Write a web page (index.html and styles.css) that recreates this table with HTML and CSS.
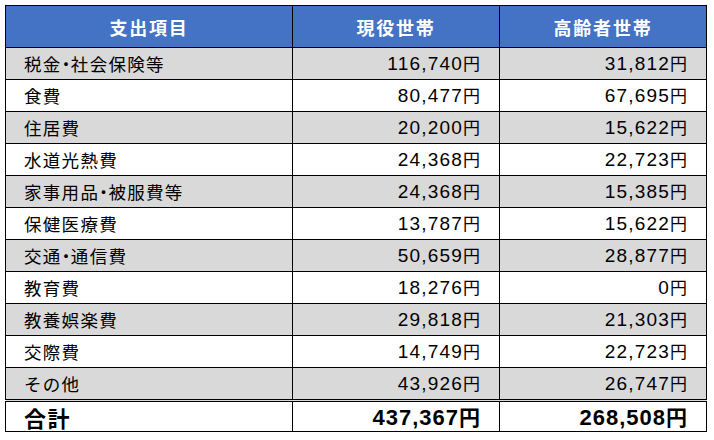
FILE: index.html
```html
<!DOCTYPE html>
<html lang="ja">
<head>
<meta charset="utf-8">
<title>支出項目</title>
<link rel="stylesheet" href="styles.css">
</head>
<body>
<table class="budget">
  <colgroup>
    <col class="c-item">
    <col class="c-val">
    <col class="c-val">
  </colgroup>
  <thead>
    <tr><th>支出項目</th><th>現役世帯</th><th>高齢者世帯</th></tr>
  </thead>
  <tbody>
    <tr class="alt"><td class="item">税金<span class="dot">・</span>社会保険等</td><td class="num">116,740<span class="yen">円</span></td><td class="num">31,812<span class="yen">円</span></td></tr>
    <tr><td class="item">食費</td><td class="num">80,477<span class="yen">円</span></td><td class="num">67,695<span class="yen">円</span></td></tr>
    <tr class="alt"><td class="item">住居費</td><td class="num">20,200<span class="yen">円</span></td><td class="num">15,622<span class="yen">円</span></td></tr>
    <tr><td class="item">水道光熱費</td><td class="num">24,368<span class="yen">円</span></td><td class="num">22,723<span class="yen">円</span></td></tr>
    <tr class="alt"><td class="item">家事用品<span class="dot">・</span>被服費等</td><td class="num">24,368<span class="yen">円</span></td><td class="num">15,385<span class="yen">円</span></td></tr>
    <tr><td class="item">保健医療費</td><td class="num">13,787<span class="yen">円</span></td><td class="num">15,622<span class="yen">円</span></td></tr>
    <tr class="alt"><td class="item">交通<span class="dot">・</span>通信費</td><td class="num">50,659<span class="yen">円</span></td><td class="num">28,877<span class="yen">円</span></td></tr>
    <tr><td class="item">教育費</td><td class="num">18,276<span class="yen">円</span></td><td class="num">0<span class="yen">円</span></td></tr>
    <tr class="alt"><td class="item">教養娯楽費</td><td class="num">29,818<span class="yen">円</span></td><td class="num">21,303<span class="yen">円</span></td></tr>
    <tr><td class="item">交際費</td><td class="num">14,749<span class="yen">円</span></td><td class="num">22,723<span class="yen">円</span></td></tr>
    <tr class="alt last"><td class="item">その他</td><td class="num">43,926<span class="yen">円</span></td><td class="num">26,747<span class="yen">円</span></td></tr>
  </tbody>
  <tfoot>
    <tr class="total"><td class="item">合計</td><td class="num">437,367<span class="yen">円</span></td><td class="num">268,508<span class="yen">円</span></td></tr>
  </tfoot>
</table>
</body>
</html>
```

FILE: styles.css
```css
html, body {
  margin: 0;
  padding: 0;
  background: #ffffff;
}

body {
  padding: 5px 0 0 5px;
  font-family: "Noto Sans CJK JP", "Liberation Sans", sans-serif;
  color: #000;
}

.budget {
  border-collapse: collapse;
  width: 702px;
  table-layout: fixed;
}

.c-item { width: 287px; }
.c-val { width: 207px; }

.budget th,
.budget td {
  border: 1px solid #000;
  padding: 0;
  vertical-align: middle;
}

.budget th {
  background: #4472c4;
  color: #fff;
  font-weight: bold;
  font-size: 18px;
  height: 41px;
  text-align: center;
  letter-spacing: 1.8px;
}

.budget td {
  height: 31px;
  font-size: 17px;
  line-height: 20px;
}

.budget tr.alt td {
  background: #d9d9d9;
}

.budget tr.last td {
  border-bottom: 3px double #000;
}

.item {
  padding-left: 18px !important;
  font-size: 17.5px !important;
  letter-spacing: 1.3px;
  white-space: nowrap;
}

.dot {
  font-feature-settings: "palt" 1;
  letter-spacing: 0.5px;
}

.num {
  text-align: right;
  padding-right: 19px !important;
  font-family: "Liberation Sans", Arial, sans-serif;
  font-size: 19px !important;
  letter-spacing: 1.2px;
}

.yen {
  font-family: "Noto Sans CJK JP", sans-serif;
  font-size: 17px;
  letter-spacing: 0;
}

.budget tr.total td {
  height: 29px;
  font-weight: bold;
}

.budget tr.total .item {
  font-size: 22px !important;
  letter-spacing: 1.5px;
}

.budget tr.total .num {
  font-size: 22px !important;
  letter-spacing: 1px;
}

.budget tr.total .yen {
  font-size: 21px;
}
```
